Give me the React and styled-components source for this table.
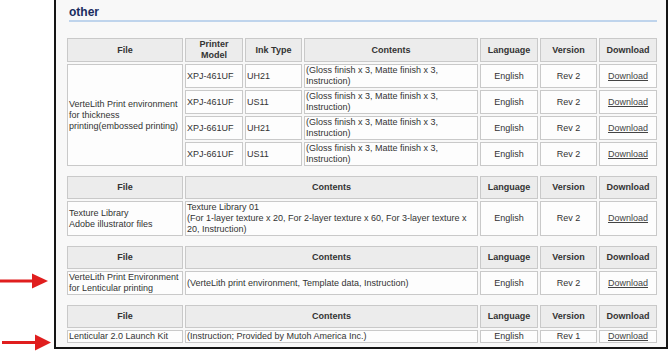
import React from 'react';
import styled, { createGlobalStyle } from 'styled-components';

const Global = createGlobalStyle`
  html, body { margin: 0; padding: 0; background: #fff; }
  body { font-family: "Liberation Sans", Arial, sans-serif; }
`;

const Page = styled.div`
  position: relative;
  width: 670px;
  height: 351px;
  overflow: hidden;
  padding-left: 54px;
  box-sizing: border-box;
`;

const Frame = styled.section`
  width: 614px;
  box-sizing: border-box;
  border: 2px solid #151515;
  border-top: 0;
  background: #f8f8f8;
  padding: 5px 9px 4px 11px;
  display: flex;
  flex-direction: column;
  gap: 10px;
`;

const Title = styled.h2`
  margin: 0 0 6px 2px;
  padding: 0 0 1px 0;
  font-size: 12px;
  line-height: 14px;
  font-weight: bold;
  color: #1b2c5e;
  border-bottom: 2px solid #bfd4ec;
`;

const Grid = styled.div`
  display: grid;
  grid-template-columns: 116px 58px 57px 174px 58px 57px 58px;
  gap: 2px;
`;

const Cell = styled.div`
  display: flex;
  align-items: center;
  justify-content: ${(p) => (p.$center ? 'center' : 'flex-start')};
  text-align: ${(p) => (p.$center ? 'center' : 'left')};
  border: 1px solid #c9c9c9;
  background: #fdfdfd;
  padding: 0 1px;
  font-size: 9px;
  line-height: 11px;
  color: #333;
  grid-column: span ${(p) => p.$span || 1};
  grid-row: span ${(p) => p.$rows || 1};
`;

const Head = styled(Cell)`
  background: #ececec;
  font-weight: bold;
  min-height: 21px;
  justify-content: center;
  text-align: center;
`;

const Link = styled.a`
  color: #444;
  text-decoration: underline;
  cursor: pointer;
`;

const Arrow = styled.svg`
  position: absolute;
  left: 0;
  top: ${(p) => p.$top}px;
  display: block;
`;

const HeadRow = ({ full }) => (
  <>
    <Head>File</Head>
    {full ? (
      <>
        <Head>Printer Model</Head>
        <Head>Ink Type</Head>
        <Head>Contents</Head>
      </>
    ) : (
      <Head $span={3}>Contents</Head>
    )}
    <Head>Language</Head>
    <Head>Version</Head>
    <Head>Download</Head>
  </>
);

const Tail = ({ rev }) => (
  <>
    <Cell $center>English</Cell>
    <Cell $center>{rev}</Cell>
    <Cell $center>
      <Link>Download</Link>
    </Cell>
  </>
);

const models = [
  ['XPJ-461UF', 'UH21'],
  ['XPJ-461UF', 'US11'],
  ['XPJ-661UF', 'UH21'],
  ['XPJ-661UF', 'US11'],
];

export default function App() {
  return (
    <>
      <Global />
      <Page>
        <Frame>
          <Title>other</Title>
          <Grid>
            <HeadRow full />
            {models.map(([m, ink], i) => (
              <React.Fragment key={i}>
                {i === 0 && (
                  <Cell $rows={4}>
                    VerteLith Print environment for thickness printing(embossed printing)
                  </Cell>
                )}
                <Cell>{m}</Cell>
                <Cell>{ink}</Cell>
                <Cell>(Gloss finish x 3, Matte finish x 3, Instruction)</Cell>
                <Tail rev="Rev 2" />
              </React.Fragment>
            ))}
          </Grid>
          <Grid>
            <HeadRow />
            <Cell>
              Texture Library
              <br />
              Adobe illustrator files
            </Cell>
            <Cell $span={3}>
              Texture Library 01
              <br />
              (For 1-layer texture x 20, For 2-layer texture x 60, For 3-layer texture x 20, Instruction)
            </Cell>
            <Tail rev="Rev 2" />
          </Grid>
          <Grid>
            <HeadRow />
            <Cell>VerteLith Print Environment for Lenticular printing</Cell>
            <Cell $span={3}>(VerteLith print environment, Template data, Instruction)</Cell>
            <Tail rev="Rev 2" />
          </Grid>
          <Grid>
            <HeadRow />
            <Cell>Lenticular 2.0 Launch Kit</Cell>
            <Cell $span={3}>(Instruction; Provided by Mutoh America Inc.)</Cell>
            <Tail rev="Rev 1" />
          </Grid>
        </Frame>
        <Arrow $top={272} width="50" height="18" viewBox="0 0 50 18">
          <rect x="0" y="7.5" width="34" height="3" fill="#e01e1e" />
          <polygon points="32,1.5 48,9 32,16.5" fill="#e01e1e" />
        </Arrow>
        <Arrow $top={333} width="52" height="18" viewBox="0 0 52 18">
          <rect x="2" y="8" width="35" height="3" fill="#e01e1e" />
          <polygon points="35,1.5 51,9.5 35,17.5" fill="#e01e1e" />
        </Arrow>
      </Page>
    </>
  );
}
